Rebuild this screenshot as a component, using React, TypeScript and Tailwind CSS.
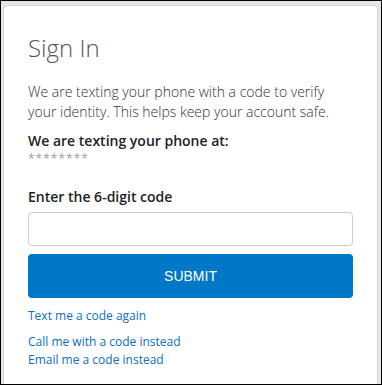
export default function App() {
  return (
    <div
      className="w-[382px] h-[385px] overflow-hidden border border-black bg-[#e6e6e6] pt-[4px] pl-[2px] pr-[3px]"
      style={{ fontFamily: '"Open Sans", sans-serif' }}
    >
      <div className="h-[400px] rounded-[5px] border border-[#d4d4d4] bg-white pl-[24px] pr-[24px] pt-[26px]">
        <h1 className="text-[24px] font-light leading-[32px] text-[#555]">Sign In</h1>
        <p className="mt-[18px] text-[14px] font-light leading-[20px] text-[#333]">
          We are texting your phone with a code to verify your identity. This helps keep your account safe.
        </p>
        <div className="mt-[10px] text-[14px] font-semibold leading-[18px] text-[#222]">
          We are texting your phone at:
        </div>
        <div className="text-[12px] leading-[18px] tracking-[1px] text-[#a0a0a0]">********</div>
        <label className="mt-[19px] block text-[14px] font-semibold leading-[20px] text-[#222]">
          Enter the 6-digit code
        </label>
        <input
          type="text"
          className="mt-[5px] block h-[34px] w-[325px] rounded-[4px] border border-[#ccc] bg-white px-3 outline-none"
        />
        <button
          className="mt-[8px] block h-[44px] w-[325px] rounded-[4px] bg-[#0078c8] text-[14px] text-white"
          style={{ fontFamily: '"Liberation Sans", Arial, sans-serif' }}
        >
          SUBMIT
        </button>
        <div className="mt-[9px] text-[12px] leading-[18px] text-[#0b6fbf]">
          <a className="block">Text me a code again</a>
          <a className="mt-[8px] block">Call me with a code instead</a>
          <a className="block">Email me a code instead</a>
        </div>
      </div>
    </div>
  );
}
